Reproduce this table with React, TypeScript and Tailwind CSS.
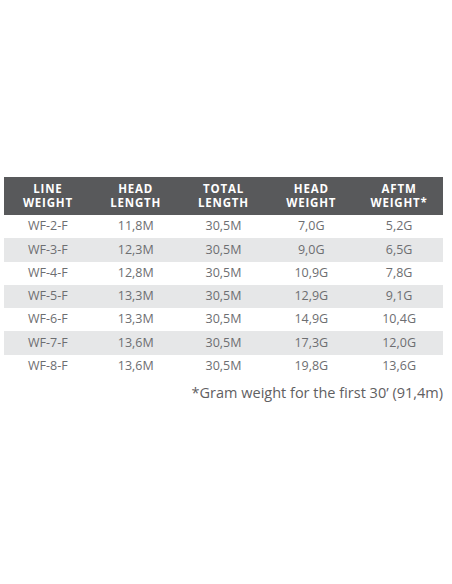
const headers = [
  ["LINE", "WEIGHT"],
  ["HEAD", "LENGTH"],
  ["TOTAL", "LENGTH"],
  ["HEAD", "WEIGHT"],
  ["AFTM", "WEIGHT*"],
];

const rows = [
  ["WF-2-F", "11,8M", "30,5M", "7,0G", "5,2G"],
  ["WF-3-F", "12,3M", "30,5M", "9,0G", "6,5G"],
  ["WF-4-F", "12,8M", "30,5M", "10,9G", "7,8G"],
  ["WF-5-F", "13,3M", "30,5M", "12,9G", "9,1G"],
  ["WF-6-F", "13,3M", "30,5M", "14,9G", "10,4G"],
  ["WF-7-F", "13,6M", "30,5M", "17,3G", "12,0G"],
  ["WF-8-F", "13,6M", "30,5M", "19,8G", "13,6G"],
];

export default function App() {
  return (
    <div className="w-[452px] h-[584px] bg-white font-['Open_Sans',sans-serif]">
      <div className="pt-[177px] pl-[4px] w-[443px]">
        <div className="grid grid-cols-5 h-[38px] bg-[#58595b] text-white font-bold text-[11.5px] leading-[14px] tracking-[0.07em]">
          {headers.map((h, i) => (
            <div key={i} className="flex flex-col items-center justify-center">
              <span>{h[0]}</span>
              <span>{h[1]}</span>
            </div>
          ))}
        </div>
        {rows.map((row, i) => (
          <div
            key={i}
            className={`grid grid-cols-5 h-[23.3px] items-center text-[12.5px] text-[#6d6e71] ${
              i % 2 === 1 ? "bg-[#e6e7e8]" : "bg-white"
            }`}
          >
            {row.map((cell, j) => (
              <div key={j} className="text-center">
                {cell}
              </div>
            ))}
          </div>
        ))}
        <p className="mt-[5px] text-right text-[14.5px] leading-[20px] text-[#5f6062]">
          *Gram weight for the first 30’ (91,4m)
        </p>
      </div>
    </div>
  );
}
